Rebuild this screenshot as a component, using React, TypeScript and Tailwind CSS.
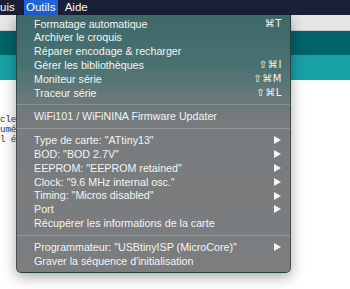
import React from "react";

type Item = { label: string; shortcut?: string; submenu?: boolean };

const groups: Item[][] = [
  [
    { label: "Formatage automatique", shortcut: "⌘T" },
    { label: "Archiver le croquis" },
    { label: "Réparer encodage & recharger" },
    { label: "Gérer les bibliothèques", shortcut: "⇧⌘I" },
    { label: "Moniteur série", shortcut: "⇧⌘M" },
    { label: "Traceur série", shortcut: "⇧⌘L" },
  ],
  [{ label: "WiFi101 / WiFiNINA Firmware Updater" }],
  [
    { label: 'Type de carte: "ATtiny13"', submenu: true },
    { label: 'BOD: "BOD 2.7V"', submenu: true },
    { label: 'EEPROM: "EEPROM retained"', submenu: true },
    { label: 'Clock: "9.6 MHz internal osc."', submenu: true },
    { label: 'Timing: "Micros disabled"', submenu: true },
    { label: "Port", submenu: true },
    { label: "Récupérer les informations de la carte" },
  ],
  [
    { label: 'Programmateur: "USBtinyISP (MicroCore)"', submenu: true },
    { label: "Graver la séquence d'initialisation" },
  ],
];

const Arrow = () => (
  <svg width="7" height="8" viewBox="0 0 7 8" className="mr-[1px]">
    <polygon points="0,0 7,4 0,8" fill="#f4f4f4" />
  </svg>
);

const MenuRow = ({ item }: { item: Item }) => (
  <div className="h-[13.8px] flex items-center justify-between pl-[17px] pr-[8px] text-[10.7px] text-[#f4f4f4] leading-none whitespace-nowrap">
    <span>{item.label}</span>
    {item.shortcut && (
      <span className="font-['DejaVu_Sans',sans-serif] text-[10px] tracking-[0.6px]">
        {item.shortcut}
      </span>
    )}
    {item.submenu && <Arrow />}
  </div>
);

export default function App() {
  return (
    <div className="relative w-[350px] h-[289px] overflow-hidden bg-white font-['Liberation_Sans',Arial,sans-serif]">
      {/* menu bar */}
      <div className="h-[15px] bg-[#1c2036] flex items-stretch text-white text-[11.5px] leading-none">
        <span className="flex items-center">uis</span>
        <span className="flex items-center ml-[9px] w-[34px] justify-center bg-[#1f64d8]">
          Outils
        </span>
        <span className="flex items-center ml-[7px]">Aide</span>
      </div>

      {/* app behind */}
      <div className="h-[16px] bg-[#e7e7e7] border-b border-[#c9c9c9]" />
      <div className="h-[24px] bg-[#006468]" />
      <div className="h-[25px] bg-[#17a1a5]" />
      <div className="pt-[35px] font-['Liberation_Mono',monospace] text-[9px] leading-[10px] text-[#333]">
        <div>cler</div>
        <div>umé</div>
        <div>l é</div>
      </div>

      {/* dropdown */}
      <div className="absolute left-[16px] top-[15px] w-[275px] pt-[2px] pb-[4px] rounded-b-[5px] border border-t-0 border-black/40 shadow-[0_4px_14px_rgba(0,0,0,0.35)] bg-[linear-gradient(180deg,#3f6767_0%,#4b7272_20%,#6c797a_34%,#797c7e_44%,#7b7d7f_100%)]">
        {groups.map((g, gi) => (
          <div key={gi}>
            {gi > 0 && (
              <div className="h-[10px] flex items-center">
                <div className="h-px w-full bg-white/20" />
              </div>
            )}
            {g.map((it) => (
              <MenuRow key={it.label} item={it} />
            ))}
          </div>
        ))}
      </div>
    </div>
  );
}
